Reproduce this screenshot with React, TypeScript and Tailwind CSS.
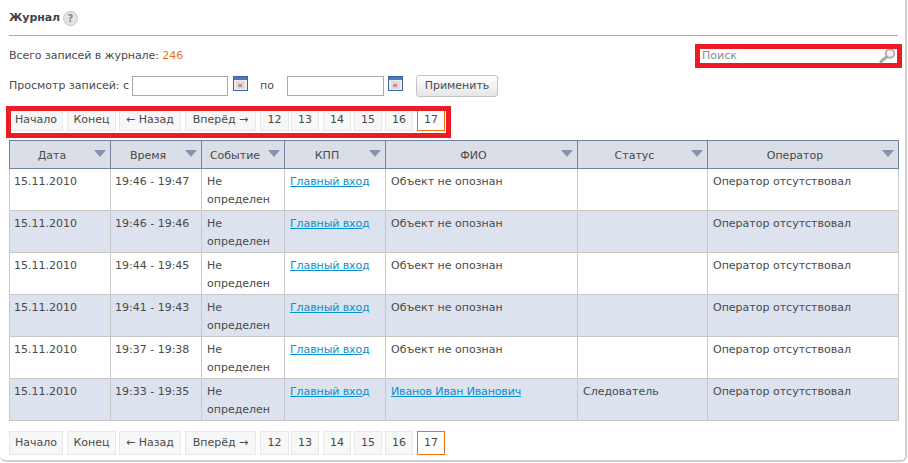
const rows = [
  ["19:46 - 19:47", "Объект не опознан", ""],
  ["19:46 - 19:46", "Объект не опознан", ""],
  ["19:44 - 19:45", "Объект не опознан", ""],
  ["19:41 - 19:43", "Объект не опознан", ""],
  ["19:37 - 19:38", "Объект не опознан", ""],
  ["19:33 - 19:35", "Иванов Иван Иванович", "Следователь"],
];
const heads: [string, string][] = [
  ["Дата", "w-[101px]"],
  ["Время", "w-[91px]"],
  ["Событие", "w-[83px]"],
  ["КПП", "w-[101px]"],
  ["ФИО", "w-[192px]"],
  ["Статус", "w-[130px]"],
  ["Оператор", "w-[191px]"],
];
const pages: [string, string][] = [
  ["Начало", "w-[54px] ml-0"],
  ["Конец", "w-[49px] ml-[4px]"],
  ["← Назад", "w-[62px] ml-[3px]"],
  ["Вперёд →", "w-[71px] ml-[4px]"],
  ["12", "w-[29px] ml-[4px]"],
  ["13", "w-[28px] ml-[2px]"],
  ["14", "w-[28px] ml-[4px]"],
  ["15", "w-[28px] ml-[3px]"],
  ["16", "w-[28px] ml-[3px]"],
];

function Pager({ className }: { className: string }) {
  return (
    <div className={`flex ${className}`}>
      {pages.map(([t, c]) => (
        <span key={t} className={`${c} flex items-center justify-center bg-[#f7f7f7] border border-[#e8e8e8] whitespace-nowrap`}>{t}</span>
      ))}
      <span className="w-[28px] ml-[4px] flex items-center justify-center bg-white border border-[#f07010]">17</span>
    </div>
  );
}

function Cal() {
  return (
    <svg width="15" height="15" viewBox="0 0 15 15" className="block shrink-0">
      <rect x="0.5" y="0.5" width="14" height="14" fill="#eeeeee" stroke="#3d62a8" />
      <rect x="1" y="1" width="13" height="3" fill="#4f78ba" />
      <path d="M3 6h9M3 8h9M3 10h9M3 12h9M6 5.5v7M9 5.5v7" stroke="#d0d0d0" strokeWidth="1" />
      <rect x="5" y="8" width="4" height="3" fill="#e08a80" />
    </svg>
  );
}

export default function App() {
  return (
    <div className="w-[908px] h-[463px] bg-white overflow-hidden font-['DejaVu_Sans','Noto_Sans',sans-serif] text-[11px] leading-[16px] text-[#4a4a4a]">
      <div className="w-[907px] h-[462px] border-r-2 border-b-2 border-[#cfcfcf] rounded-br-[6px] rounded-bl-[6px] pl-[9px] pr-[7px]">
        <div className="h-[36px] border-b border-[#aaa] flex items-center gap-[3px] pt-[1px]">
          <span className="font-bold text-[#444] tracking-[-0.1px]">Журнал</span>
          <svg width="15" height="15" viewBox="0 0 15 15">
            <circle cx="7.5" cy="7.5" r="7" fill="#e4e4e4" stroke="#c4c4c4" />
            <text x="7.5" y="11" textAnchor="middle" fontSize="10" fontWeight="700" fill="#888">?</text>
          </svg>
        </div>
        <div className="flex justify-between items-center h-[38px] pt-[1px]">
          <div className="tracking-[-0.07px]">Всего записей в журнале: <span className="text-[#f07010]">246</span></div>
          <div className="relative w-[197px] h-[14px] mr-[1px] flex items-center justify-between pl-[2px] pr-[1px] text-[#8a8a8a]">
            <span>Поиск</span>
            <svg width="17" height="15" viewBox="0 0 17 15">
              <circle cx="11" cy="5.5" r="4.2" fill="#f4f4f4" stroke="#b5b5b5" strokeWidth="2" />
              <path d="M7.5 9 L2 13.5" stroke="#aaa" strokeWidth="3" strokeLinecap="round" />
            </svg>
            <div className="absolute -inset-[5px] border-[5px] border-[#ed1c24]" />
          </div>
        </div>
        <div className="flex items-center h-[24px]">
          <span className="w-[123px] whitespace-nowrap">Просмотр записей: с</span>
          <span className="block w-[96px] h-[20px] border border-[#aaa] bg-white" />
          <span className="ml-[5px] -mt-[5px]"><Cal /></span>
          <span className="ml-[12px] w-[27px]">по</span>
          <span className="block w-[97px] h-[20px] border border-[#aaa] bg-white" />
          <span className="ml-[4px] -mt-[5px]"><Cal /></span>
          <span className="ml-[13px] w-[82px] h-[22px] flex items-center justify-center rounded-[3px] border border-[#c4c4c4] bg-gradient-to-b from-white to-[#e6e6e6]">Применить</span>
        </div>
        <div className="relative mt-[11px] h-[22px]">
          <Pager className="h-[22px]" />
          <div className="absolute left-[-3px] top-[-3px] w-[445px] h-[32px] border-[5px] border-[#ed1c24]" />
        </div>
        <table className="mt-[9px] w-[890px] table-fixed border-collapse">
          <thead>
            <tr className="h-[28px] bg-[#d9dee7]">
              {heads.map(([h, w]) => (
                <th key={h} className={`${w} relative p-0 pr-[16px] pt-[2px] font-normal text-center border border-[#73839f]`}>
                  {h}
                  <svg width="12" height="7" viewBox="0 0 12 7" className="absolute right-[4px] top-[9px]">
                    <path d="M0 0h12l-6 7z" fill="#8593ad" />
                  </svg>
                </th>
              ))}
            </tr>
          </thead>
          <tbody>
            {rows.map(([time, name, status], i) => {
              const td = "align-top p-0 pl-[5px] pt-[5px] border border-[#c8c8c8]";
              const first = "align-top p-0 pl-[4px] pt-[5px] border border-[#c8c8c8]";
              return (
                <tr key={i} className={`h-[42px] ${i % 2 ? "bg-[#dce2ee]" : "bg-white"}`}>
                  <td className={first}>15.11.2010</td>
                  <td className={first}>{time}</td>
                  <td className="align-top p-0 pl-[5px] pt-[4px] border border-[#c8c8c8] leading-[18px]">Не определен</td>
                  <td className={td}><a className="text-[#0a8fd0] underline tracking-[-0.1px]">Главный вход</a></td>
                  <td className={td}>{i === 5 ? <a className="text-[#0a8fd0] underline tracking-[-0.15px]">{name}</a> : name}</td>
                  <td className={td}>{status}</td>
                  <td className={td}>Оператор отсутствовал</td>
                </tr>
              );
            })}
          </tbody>
        </table>
        <div className="mt-[10px]"><Pager className="h-[24px]" /></div>
      </div>
    </div>
  );
}
